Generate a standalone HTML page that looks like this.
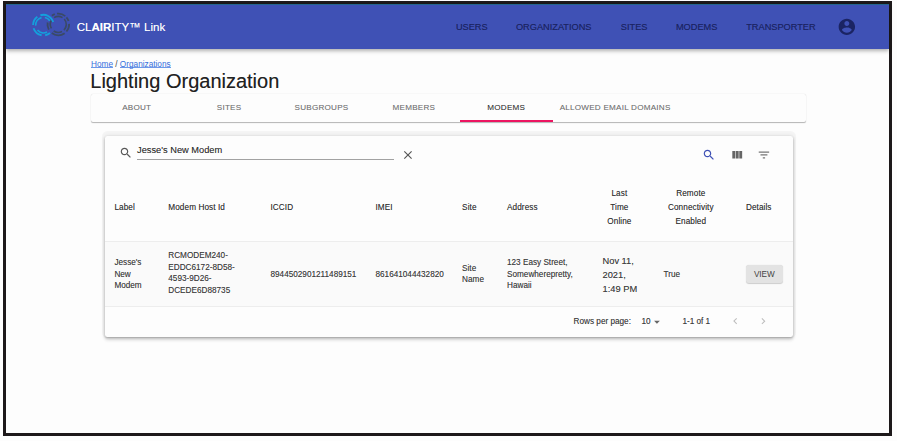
<!DOCTYPE html>
<html>
<head>
<meta charset="utf-8">
<title>CLAIRITY Link</title>
<style>
html,body{margin:0;padding:0;}
body{width:897px;height:441px;background:#fdfdfd;position:relative;overflow:hidden;font-family:"Liberation Sans",Arial,sans-serif;color:#2b2b2b;}
.abs,.t{position:absolute;white-space:nowrap;text-shadow:0 0 0.5px rgba(40,40,40,.45);}
#frame{position:absolute;left:3px;top:1px;width:883px;height:429px;border:3px solid #1d191a;background:#fdfdfd;}
#appbar{position:absolute;left:6px;top:4px;width:883px;height:44.8px;background:#3f51b5;box-shadow:0 1.4px 2.5px -0.6px rgba(0,0,0,.15),0 2.5px 3.2px 0 rgba(0,0,0,.12),0 0.6px 6px 0 rgba(0,0,0,.1);}
#topline{position:absolute;left:6px;top:4px;width:883px;height:1px;background:#23668f;}
.nav{font-size:9.22px;line-height:12px;color:#1b2463;text-shadow:0 0 0.5px rgba(27,36,99,.6);}
.title{font-size:11.55px;line-height:14px;color:#fff;text-shadow:0 0 0.5px rgba(255,255,255,.5);}
.bc{font-size:8.24px;line-height:10px;color:#444;text-shadow:none;}
.bc a{color:#376fdc;text-decoration:none;background:linear-gradient(#5b8be6,#5b8be6) 0 calc(100% - 0.5px)/100% 0.9px no-repeat;}
.h4{font-size:20px;line-height:24px;color:#222;}
#tabs{position:absolute;left:90.5px;top:94px;width:715px;height:27.8px;background:#fdfdfd;border-radius:2px;box-shadow:0 1.2px 0.8px -0.6px rgba(0,0,0,.14),0 0.8px 0.8px 0 rgba(0,0,0,.1),0 0.8px 1.7px 0 rgba(0,0,0,.08);}
.tab{font-size:8.12px;letter-spacing:0.23px;line-height:10px;color:#757575;text-shadow:0 0 0.5px rgba(117,117,117,.4);}
.tab.sel{color:#333;}
#ind{position:absolute;left:460.2px;top:120.4px;width:92.6px;height:1.6px;background:#ec1561;}
#card{position:absolute;left:104.5px;top:136.4px;width:688.2px;height:200.5px;background:#fdfdfd;border-radius:2.3px;box-shadow:0 -2px 0 3px rgba(0,0,0,.03),0 1.2px 2.3px -0.6px rgba(0,0,0,.2),0 2.3px 3.6px 0 rgba(0,0,0,.13),0 0.6px 5.8px 0 rgba(0,0,0,.09);}
.in{font-size:9.25px;line-height:12px;color:#333;}
.th{font-size:8.2px;letter-spacing:0.09px;line-height:13.9px;color:#333;}
.td{font-size:8.2px;line-height:11.6px;color:#404040;}
.tdl{font-size:9.3px;line-height:14px;color:#404040;}
.c{text-align:center;}
.hl{position:absolute;height:1px;background:#ededed;}
#row{position:absolute;left:104.5px;top:241px;width:688.2px;height:65.4px;background:#fafafa;}
#view{position:absolute;left:745.8px;top:264.6px;width:37.1px;height:18.6px;background:#e3e3e3;border-radius:3px;box-shadow:0 0.6px 1px rgba(0,0,0,.18);font-size:8.2px;letter-spacing:0px;line-height:20.2px;text-align:center;color:#444;}
svg{position:absolute;overflow:visible;}
</style>
</head>
<body>
<div id="frame"></div>
<div id="appbar"></div>
<div id="topline"></div>

<!-- logo -->
<svg style="left:30px;top:12px" width="44" height="28" viewBox="30 12 44 28">
  <g fill="none" stroke-linecap="butt">
<path stroke="#3a4a66" stroke-width="1.85" d="M51.95 15.66A10.8 10.8 0 0 1 54.78 14.19M56.98 13.68A10.8 10.8 0 0 1 65.24 16.13M66.45 17.31A10.8 10.8 0 0 1 68.57 21.06M69.09 23.83A10.8 10.8 0 0 1 66.45 31.49M64.65 33.14A10.8 10.8 0 0 1 51.80 33.03M48.85 29.64A10.8 10.8 0 0 1 47.66 22.52"/>
<path stroke="#3a4a66" stroke-width="1.65" d="M51.37 28.40A8.0 8.0 0 0 1 51.75 19.81M54.06 17.62A8.0 8.0 0 0 1 62.54 17.62M64.25 19.05A8.0 8.0 0 0 1 63.96 30.06M62.06 31.46A8.0 8.0 0 0 1 53.71 30.95"/>
<path stroke="#14a0dc" stroke-width="1.85" d="M33.10 25.10A10.3 10.3 0 0 1 37.35 16.77M40.39 15.25A10.3 10.3 0 0 1 53.20 21.92M41.61 35.24A10.3 10.3 0 0 1 33.60 28.28M50.02 32.99A10.3 10.3 0 0 1 45.19 35.24"/>
<path stroke="#14a0dc" stroke-width="1.65" d="M35.72 25.64A7.7 7.7 0 0 1 41.54 17.63M44.87 17.54A7.7 7.7 0 0 1 49.78 20.79M47.01 31.90A7.7 7.7 0 0 1 37.50 30.05"/>
  </g>
</svg>
<span class="t title" style="left:76.7px;top:20.1px">CL<b>AIR</b>ITY™ Link</span>

<span class="t nav" style="left:455.9px;top:20.6px">USERS</span>
<span class="t nav" style="left:515.9px;top:20.6px">ORGANIZATIONS</span>
<span class="t nav" style="left:620.8px;top:20.6px">SITES</span>
<span class="t nav" style="left:675.9px;top:20.6px">MODEMS</span>
<span class="t nav" style="left:746.2px;top:20.6px">TRANSPORTER</span>
<svg style="left:837.2px;top:16.8px" width="19.7" height="19.7" viewBox="0 0 24 24"><path fill="#1b2463" d="M12 2C6.48 2 2 6.48 2 12s4.48 10 10 10 10-4.48 10-10S17.52 2 12 2zm0 3c1.66 0 3 1.34 3 3s-1.34 3-3 3-3-1.34-3-3 1.34-3 3-3zm0 14.2c-2.5 0-4.71-1.28-6-3.22.03-1.99 4-3.08 6-3.08 1.99 0 5.97 1.09 6 3.08-1.29 1.94-3.5 3.22-6 3.22z"/></svg>

<span class="t bc" style="left:91px;top:59.6px"><a>Home</a> / <a>Organizations</a></span>
<span class="t h4" style="left:90.3px;top:69.2px">Lighting Organization</span>

<div id="tabs"></div>
<span class="t tab c" style="left:90.5px;width:92.4px;top:102.9px">ABOUT</span>
<span class="t tab c" style="left:182.9px;width:92.4px;top:102.9px">SITES</span>
<span class="t tab c" style="left:275.3px;width:92.4px;top:102.9px">SUBGROUPS</span>
<span class="t tab c" style="left:367.7px;width:92.4px;top:102.9px">MEMBERS</span>
<span class="t tab c sel" style="left:460.1px;width:92.4px;top:102.9px">MODEMS</span>
<span class="t tab" style="left:559.7px;top:102.9px">ALLOWED EMAIL DOMAINS</span>
<div id="ind"></div>

<div id="card"></div>
<!-- search -->
<svg style="left:118.5px;top:146.1px" width="13.9" height="13.9" viewBox="0 0 24 24"><path fill="#585858" d="M15.5 14h-.79l-.28-.27C15.41 12.59 16 11.11 16 9.5 16 5.91 13.09 3 9.5 3S3 5.91 3 9.5 5.91 16 9.5 16c1.61 0 3.09-.59 4.23-1.57l.27.28v.79l5 4.99L20.49 19l-4.99-5zm-6 0C7.01 14 5 11.99 5 9.500 5 7.010 7.010 5 9.500 5 11.990 5 14 7.010 14 9.500 14 11.990 11.990 14 9.500 14z"/></svg>
<span class="t in" style="left:137.1px;top:143.5px">Jesse's New Modem</span>
<div class="hl" style="left:137.1px;top:158.6px;width:257px;background:#a2a2a2;height:0.8px"></div>
<svg style="left:400.9px;top:147.9px" width="13.9" height="13.9" viewBox="0 0 24 24"><path fill="#555" d="M19 6.41L17.59 5 12 10.59 6.41 5 5 6.41 10.59 12 5 17.59 6.41 19 12 13.41 17.59 19 19 17.59 13.41 12z"/></svg>
<svg style="left:702.1px;top:147.6px" width="13.9" height="13.9" viewBox="0 0 24 24"><path fill="#3f51b5" d="M15.5 14h-.79l-.28-.27C15.41 12.59 16 11.11 16 9.5 16 5.91 13.09 3 9.5 3S3 5.910 3 9.500 5.910 16 9.500 16c1.610 0 3.090-.590 4.230-1.570l.270.280v.790l5 4.990L20.490 19l-4.990-5zm-6 0C7.010 14 5 11.990 5 9.500 5 7.010 7.010 5 9.500 5 11.990 5 14 7.010 14 9.500 14 11.990 11.990 14 9.500 14z"/></svg>
<svg style="left:729.7px;top:147.9px" width="13.9" height="13.9" viewBox="0 0 24 24"><path fill="#666" d="M10 18h5V5h-5v13zm-6 0h5V5H4v13zM16 5v13h5V5h-5z"/></svg>
<svg style="left:757.2px;top:147.8px" width="13.9" height="13.9" viewBox="0 0 24 24"><path fill="#777" d="M10 18h4v-2h-4v2zM3 6v2h18V6H3zm3 7h12v-2H6v2z"/></svg>

<div id="row"></div>
<!-- header -->
<span class="t th" style="left:114.4px;top:200.6px">Label</span>
<span class="t th" style="left:168.3px;top:200.6px">Modem Host Id</span>
<span class="t th" style="left:270.5px;top:200.6px">ICCID</span>
<span class="t th" style="left:375.5px;top:200.6px">IMEI</span>
<span class="t th" style="left:462.1px;top:200.6px">Site</span>
<span class="t th" style="left:507px;top:200.6px">Address</span>
<span class="t th c" style="left:589.4px;width:60px;top:186.7px">Last<br>Time<br>Online</span>
<span class="t th c" style="left:655.8px;width:70px;top:186.7px">Remote<br>Connectivity<br>Enabled</span>
<span class="t th" style="left:745.9px;top:200.6px">Details</span>
<div class="hl" style="left:104.5px;top:240.5px;width:688.2px"></div>

<!-- row -->
<span class="t td" style="left:114.4px;top:257.0px">Jesse's<br>New<br>Modem</span>
<span class="t td" style="left:168.3px;top:250.3px">RCMODEM240-<br>EDDC6172-8D58-<br>4593-9D26-<br>DCEDE6D88735</span>
<span class="t td" style="left:270.5px;top:268.5px">8944502901211489151</span>
<span class="t td" style="left:375.5px;top:268.5px">861641044432820</span>
<span class="t td" style="left:462.1px;top:262.7px">Site<br>Name</span>
<span class="t td" style="left:507px;top:257.0px">123 Easy Street,<br>Somewherepretty,<br>Hawaii</span>
<span class="t tdl" style="left:602.5px;top:254.3px">Nov 11,<br>2021,<br>1:49 PM</span>
<span class="t td" style="left:663.5px;top:268.5px">True</span>
<div id="view">VIEW</div>
<div class="hl" style="left:104.5px;top:305.8px;width:688.2px"></div>

<!-- footer -->
<span class="t td" style="left:573.6px;top:315.8px">Rows per page:</span>
<span class="t td" style="left:641.5px;top:315.8px">10</span>
<svg style="left:650.1px;top:314.8px" width="13.9" height="13.9" viewBox="0 0 24 24"><path fill="#666" d="M7 10l5 5 5-5z"/></svg>
<span class="t td" style="left:682.4px;top:315.8px">1-1 of 1</span>
<svg style="left:729.1px;top:315.1px" width="12.6" height="12.6" viewBox="0 0 24 24"><path fill="#bdbdbd" d="M15.41 16.09l-4.58-4.59 4.58-4.59L14 5.5l-6 6 6 6z"/></svg>
<svg style="left:756.9px;top:315.1px" width="12.6" height="12.6" viewBox="0 0 24 24"><path fill="#bdbdbd" d="M8.59 16.34l4.58-4.59-4.58-4.590L10 5.750l6 6-6 6z"/></svg>
</body>
</html>
